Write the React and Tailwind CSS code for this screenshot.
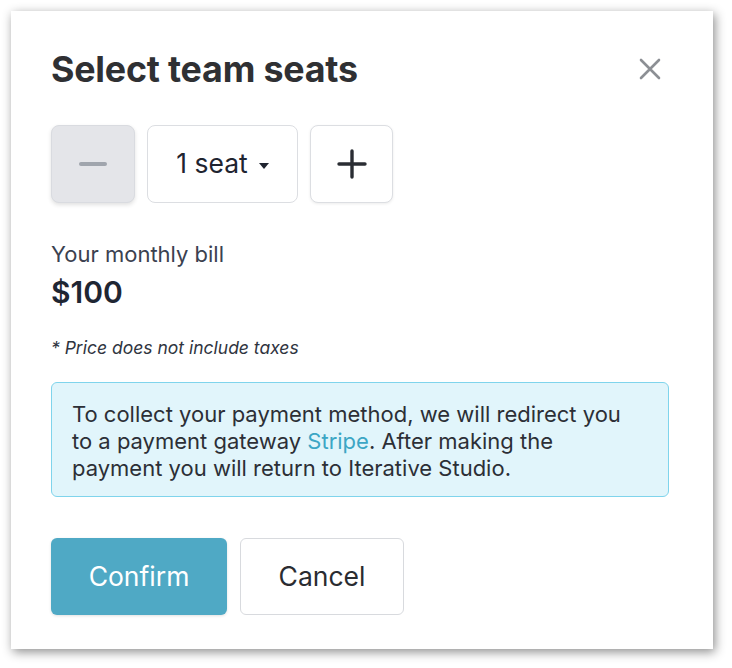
export default function App() {
  return (
    <div className="min-h-[668px] w-[732px] bg-white pt-[11px] pl-[11px]" style={{ fontFamily: 'Inter, "Noto Sans", sans-serif' }}>
      <div className="w-[702px] h-[638px] bg-white px-[40px] pt-[38px] shadow-[2px_3px_10px_rgba(0,0,0,0.45)]">
        {/* Header */}
        <div className="flex items-start justify-between">
          <h1 className="text-[35.8px] leading-[40px] font-bold text-[#2f3033] tracking-[-0.2px]">Select team seats</h1>
          <button className="mt-[9px] mr-[12px]">
            <svg width="22" height="22" viewBox="0 0 22 22" fill="none" stroke="#8c8f94" strokeWidth="2.6" strokeLinecap="round">
              <path d="M2 2L20 20M20 2L2 20" />
            </svg>
          </button>
        </div>

        {/* Seat picker */}
        <div className="flex gap-[12px] mt-[36px]">
          <button className="w-[84px] h-[78px] rounded-[8px] bg-[#e4e5e9] border border-[#d9dbe0] shadow-[0_2px_4px_rgba(0,0,0,0.12)] flex items-center justify-center">
            <svg width="28" height="6" viewBox="0 0 28 6" fill="none" stroke="#a0a5ad" strokeWidth="4" strokeLinecap="round">
              <path d="M2 3H26" />
            </svg>
          </button>
          <button className="w-[151px] h-[78px] rounded-[8px] bg-white border border-[#dcdee2] flex items-center justify-center gap-[11px] text-[26.5px] text-[#1f2430]">
            <span>1 seat</span>
            <span className="w-0 h-0 border-l-[5.5px] border-r-[5.5px] border-t-[6px] border-l-transparent border-r-transparent border-t-[#1f2430] mt-[3px]" />
          </button>
          <button className="w-[83px] h-[78px] rounded-[8px] bg-white border border-[#dcdee2] shadow-[0_1px_3px_rgba(0,0,0,0.08)] flex items-center justify-center">
            <svg width="30" height="30" viewBox="0 0 30 30" fill="none" stroke="#2a2d33" strokeWidth="3.4" strokeLinecap="round">
              <path d="M15 2V28M2 15H28" />
            </svg>
          </button>
        </div>

        {/* Bill */}
        <div className="mt-[38px] text-[22px] leading-[26px] text-[#3b4150]">Your monthly bill</div>
        <div className="mt-[8px] text-[30px] leading-[34px] font-semibold text-[#1f2633]">$100</div>
        <div className="mt-[29px] text-[17.5px] leading-[20px] italic text-[#2f3440]">* Price does not include taxes</div>

        {/* Info */}
        <div className="mt-[24px] w-[618px] rounded-[6px] border border-[#7fd4ec] bg-[#e1f5fb] pl-[20px] pr-[30px] pt-[18px] pb-[14px] text-[22px] leading-[27px] text-[#2c2f36]">
          To collect your payment method, we will redirect you to a payment gateway{' '}
          <span className="text-[#3ca6c5]">Stripe</span>. After making the payment you will return to Iterative Studio.
        </div>

        {/* Actions */}
        <div className="flex gap-[13px] mt-[41px]">
          <button className="w-[176px] h-[77px] rounded-[6px] bg-[#4fa9c5] text-white text-[26.5px] shadow-[0_1px_3px_rgba(0,0,0,0.12)]">Confirm</button>
          <button className="w-[164px] h-[77px] rounded-[6px] bg-white border border-[#d8dade] text-[26.5px] text-[#2a2c31]">Cancel</button>
        </div>
      </div>
    </div>
  );
}
